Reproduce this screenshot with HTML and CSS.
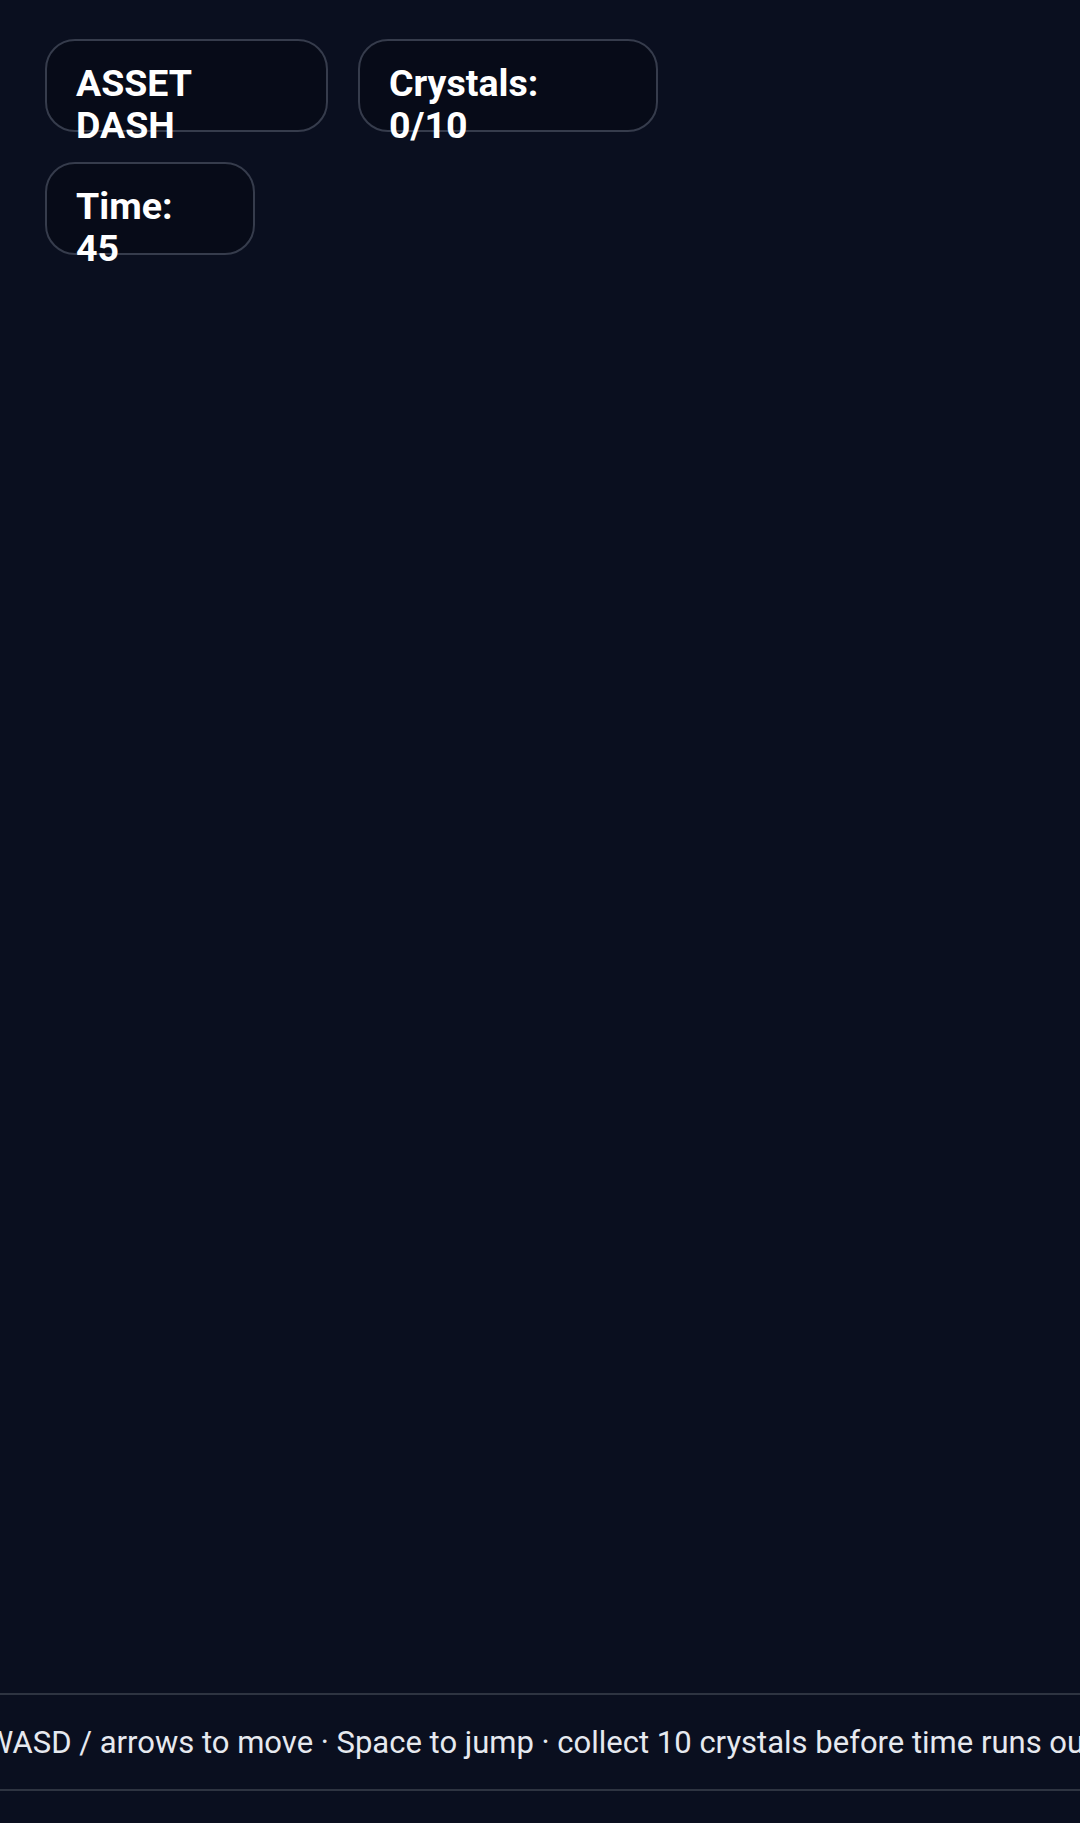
FILE: index.html
```html
<!DOCTYPE html>
<html lang="en">
<head>
<meta charset="utf-8">
<title>Asset Dash</title>
<link rel="stylesheet" href="styles.css">
</head>
<body>
  <header class="hud">
    <div class="stat stat--title"><span class="stat__label">ASSET DASH</span></div>
    <div class="stat stat--crystals"><span class="stat__label">Crystals: 0/10</span></div>
    <div class="stat stat--time"><span class="stat__label">Time: 45</span></div>
  </header>
  <main class="stage"></main>
  <footer class="help">
    <span class="help__text">WASD / arrows to move · Space to jump · collect 10 crystals before time runs out</span>
  </footer>
</body>
</html>
```
FILE: styles.css
```css
html, body {
  margin: 0;
  padding: 0;
}

body {
  height: 100vh;
  background: #0a0f1f;
  color: #ffffff;
  font-family: Roboto, "Liberation Sans", sans-serif;
  display: flex;
  flex-direction: column;
  overflow: hidden;
}

.hud {
  display: flex;
  flex-wrap: wrap;
  align-items: flex-start;
  gap: 30px 30px;
  width: 660px;
  padding: 39px 0 0 45px;
}

.stat {
  box-sizing: border-box;
  height: 93px;
  padding: 21px 29px;
  border: 2px solid #363c4c;
  border-radius: 30px;
  background: #070b18;
  font-size: 37.5px;
  line-height: 42px;
  font-weight: 700;
  color: #ffffff;
}

.stat__label {
  display: block;
  width: min-content;
}

.stat--title { width: 283px; }
.stat--crystals { width: 300px; }
.stat--time { width: 210px; }

.stage {
  flex: 1;
}

.help {
  height: 94px;
  margin-bottom: 32px;
  border-top: 2px solid #2e3441;
  border-bottom: 2px solid #2e3441;
  display: flex;
  align-items: center;
  justify-content: center;
  white-space: nowrap;
  font-size: 31px;
  color: #e6e9ef;
}

.help__text {
  flex: none;
}
```
